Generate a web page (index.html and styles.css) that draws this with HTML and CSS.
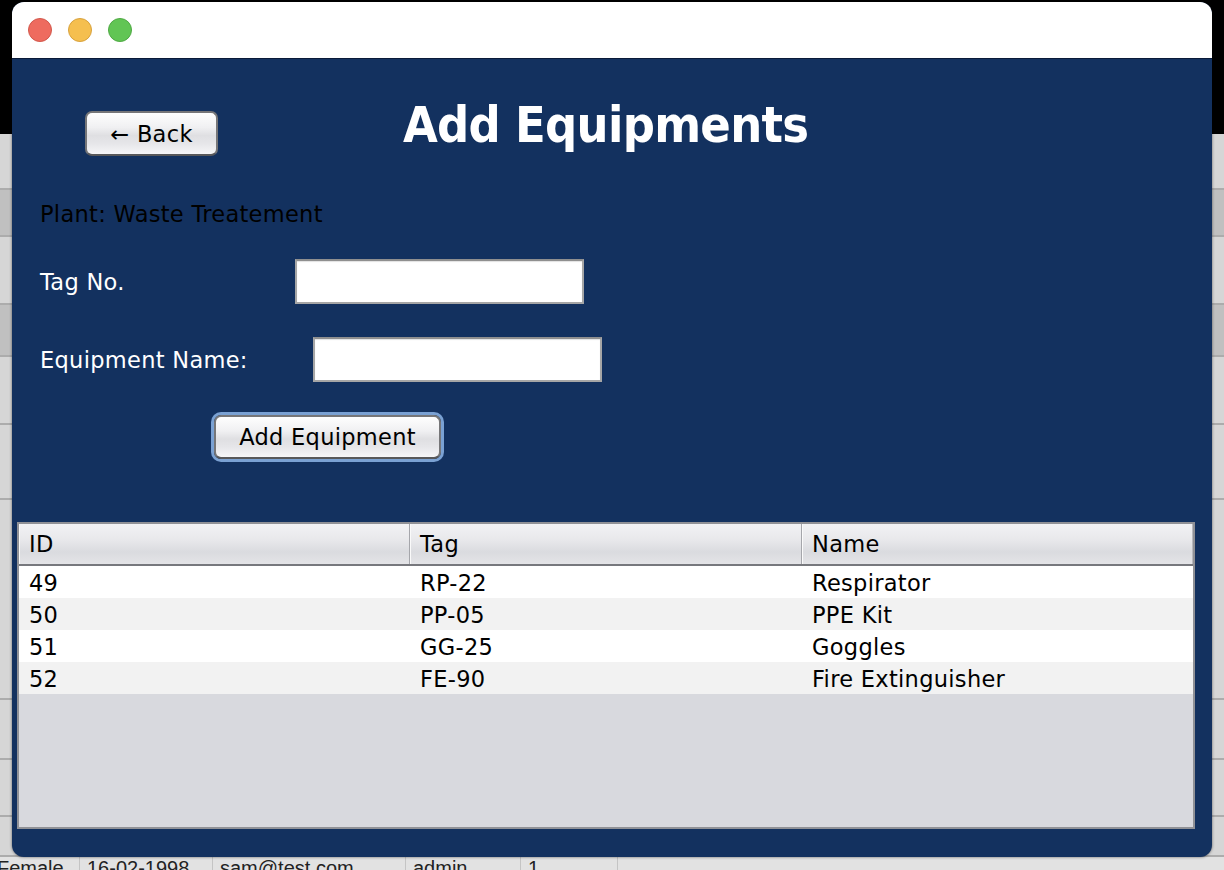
FILE: index.html
```html
<!DOCTYPE html>
<html>
<head>
<meta charset="utf-8">
<title>Add Equipments</title>
<link rel="stylesheet" href="styles.css">
</head>
<body>
<div class="desktop">
  <div class="desk-top"></div>
  <div class="behind">
    <div class="brow h56 light"></div>
    <div class="brow h47 dark"></div>
    <div class="brow h68 light"></div>
    <div class="brow h52 dark"></div>
    <div class="brow h68 light"></div>
    <div class="brow h75 light"></div>
    <div class="brow h200 light"></div>
    <div class="brow h60 light"></div>
    <div class="brow h57 light"></div>
    <div class="brow h40 light"></div>
    <div class="datarow">
      <span class="dc w80">Female</span>
      <span class="dc w133">16-02-1998</span>
      <span class="dc w193">sam@test.com</span>
      <span class="dc w115">admin</span>
      <span class="dc w97">1</span>
    </div>
  </div>
</div>

<div class="window">
  <div class="titlebar">
    <span class="light-dot red"></span>
    <span class="light-dot yellow"></span>
    <span class="light-dot green"></span>
  </div>
  <div class="content">
    <div class="header">
      <button class="btn back">← Back</button>
      <h1 class="title">Add Equipments</h1>
    </div>
    <p class="plant">Plant: Waste Treatement</p>
    <div class="field tag">
      <label class="flabel">Tag No.</label>
      <input class="finput" type="text">
    </div>
    <div class="field name">
      <label class="flabel">Equipment Name:</label>
      <input class="finput" type="text">
    </div>
    <button class="btn add">Add Equipment</button>
    <div class="table">
      <div class="thead">
        <div class="th">ID</div>
        <div class="th">Tag</div>
        <div class="th last">Name</div>
      </div>
      <div class="tr"><div class="td">49</div><div class="td">RP-22</div><div class="td">Respirator</div></div>
      <div class="tr alt"><div class="td">50</div><div class="td">PP-05</div><div class="td">PPE Kit</div></div>
      <div class="tr"><div class="td">51</div><div class="td">GG-25</div><div class="td">Goggles</div></div>
      <div class="tr alt"><div class="td">52</div><div class="td">FE-90</div><div class="td">Fire Extinguisher</div></div>
    </div>
  </div>
</div>
</body>
</html>
```

FILE: styles.css
```css
html, body {
  margin: 0;
  padding: 0;
}
body {
  width: 1224px;
  height: 870px;
  overflow: hidden;
  position: relative;
  font-family: "DejaVu Sans", "Noto Sans", sans-serif;
  font-size: 22.5px;
  letter-spacing: 0.3px;
  background: #d6d6d6;
}

/* desktop behind the dialog */
.desktop {
  display: flex;
  flex-direction: column;
  height: 870px;
}
.desk-top {
  height: 134px;
  flex: none;
  background: #000;
}
.behind {
  flex: 1;
  display: flex;
  flex-direction: column;
  background: #dcdcdc;
}
.brow {
  flex: none;
  box-sizing: border-box;
  border-bottom: 2px solid #acacac;
}
.brow.light { background: #d6d6d6; }
.brow.dark { background: #c0c0c0; }
.h56 { height: 56px; }
.h47 { height: 47px; }
.h68 { height: 68px; }
.h52 { height: 52px; }
.h75 { height: 75px; }
.h200 { height: 200px; }
.h60 { height: 60px; }
.h57 { height: 57px; }
.h40 { height: 40px; }
.datarow {
  flex: 1;
  display: flex;
  background: #e2e2e2;
  font-family: "Liberation Sans", Arial, sans-serif;
  font-size: 20px;
  letter-spacing: 0;
  line-height: 23px;
  color: #222;
  margin-left: -3px;
}
.dc {
  box-sizing: border-box;
  padding-left: 7px;
  border-right: 1px solid #c4c4c4;
  white-space: nowrap;
  overflow: hidden;
}
.w80 { width: 83px; padding-left: 0; }
.w133 { width: 133px; }
.w193 { width: 193px; }
.w115 { width: 115px; }
.w97 { width: 97px; }

/* dialog window */
.window {
  position: absolute;
  left: 12px;
  top: 2px;
  width: 1200px;
  height: 855px;
  border-radius: 12px;
  overflow: hidden;
  background: #13315f;
  box-shadow: 0 0 3px rgba(0, 0, 0, 0.55);
  display: flex;
  flex-direction: column;
}
.titlebar {
  flex: none;
  height: 40px;
  padding: 16px 0 0 16px;
  background: #fff;
  border-bottom: 1px solid #0a1a38;
  display: flex;
  gap: 16px;
  align-items: flex-start;
}
.light-dot {
  width: 24px;
  height: 24px;
  box-sizing: border-box;
  border-radius: 50%;
}
.red { background: #ee6b5f; border: 1px solid #d2584c; }
.yellow { background: #f5bf4f; border: 1px solid #d8a23e; }
.green { background: #61c554; border: 1px solid #4fa944; }

.content {
  flex: 1;
  display: flex;
  flex-direction: column;
  align-items: flex-start;
}
.header {
  display: flex;
  align-items: flex-start;
  padding: 37px 0 0 73px;
}
.btn {
  font-family: inherit;
  font-size: inherit;
  letter-spacing: inherit;
  color: #000;
  padding: 0;
  box-sizing: border-box;
  border: 2px solid #767678;
  border-bottom-color: #58585a;
  border-radius: 7px;
  background: linear-gradient(#fefefe 0%, #f0f0f2 35%, #dfdfe2 55%, #e6e6e9 75%, #f6f6f8 100%);
  display: flex;
  align-items: center;
  justify-content: center;
  line-height: normal;
}
.back {
  margin-top: 15px;
  width: 133px;
  height: 45px;
}
.title {
  margin: 0 0 0 185px;
  font-size: 50px;
  font-weight: bold;
  font-stretch: condensed;
  letter-spacing: -0.7px;
  line-height: normal;
  color: #fff;
}
.plant {
  margin: 45px 0 0 28px;
  line-height: 26px;
  color: #000;
}
.field {
  display: flex;
  align-items: center;
  height: 45px;
  margin-left: 28px;
}
.field.tag { margin-top: 32px; }
.field.name { margin-top: 33px; }
.flabel {
  color: #fff;
  line-height: normal;
}
.tag .flabel { width: 255px; }
.name .flabel { width: 273px; }
.finput {
  width: 289px;
  height: 45px;
  box-sizing: border-box;
  border: 2px solid #a6a6a6;
  border-top-color: #8f8f8f;
  background: #fff;
  box-shadow: inset 0 1px 1px rgba(0, 0, 0, 0.12);
  padding: 0;
  margin: 0;
  outline: none;
}
.add {
  margin: 33px 0 0 202px;
  width: 227px;
  height: 44px;
  box-shadow: 0 0 0 3px #7aa1d3;
}

/* table */
.table {
  margin: 63px 0 0 5px;
  width: 1178px;
  height: 307px;
  box-sizing: border-box;
  border: 2px solid #909196;
  background: #d8d9de;
  color: #000;
}
.thead, .tr {
  display: grid;
  grid-template-columns: 391px 392px 1fr;
}
.thead {
  height: 40px;
  border-bottom: 2px solid #77787d;
  background: linear-gradient(#f2f2f4 0%, #e8e8eb 40%, #dadbdf 70%, #e4e4e7 100%);
}
.th {
  box-sizing: border-box;
  padding-left: 10px;
  line-height: 40px;
  border-right: 1px solid #a5a6ab;
  box-shadow: inset 1px 0 0 #fafafa;
}
.th.last {
  border-right: 1px solid #b8b9bd;
}
.tr {
  height: 32px;
  background: #fff;
}
.tr.alt {
  background: #f2f2f2;
}
.td {
  box-sizing: border-box;
  padding: 3px 0 0 10px;
  line-height: 29px;
  white-space: nowrap;
}
```
